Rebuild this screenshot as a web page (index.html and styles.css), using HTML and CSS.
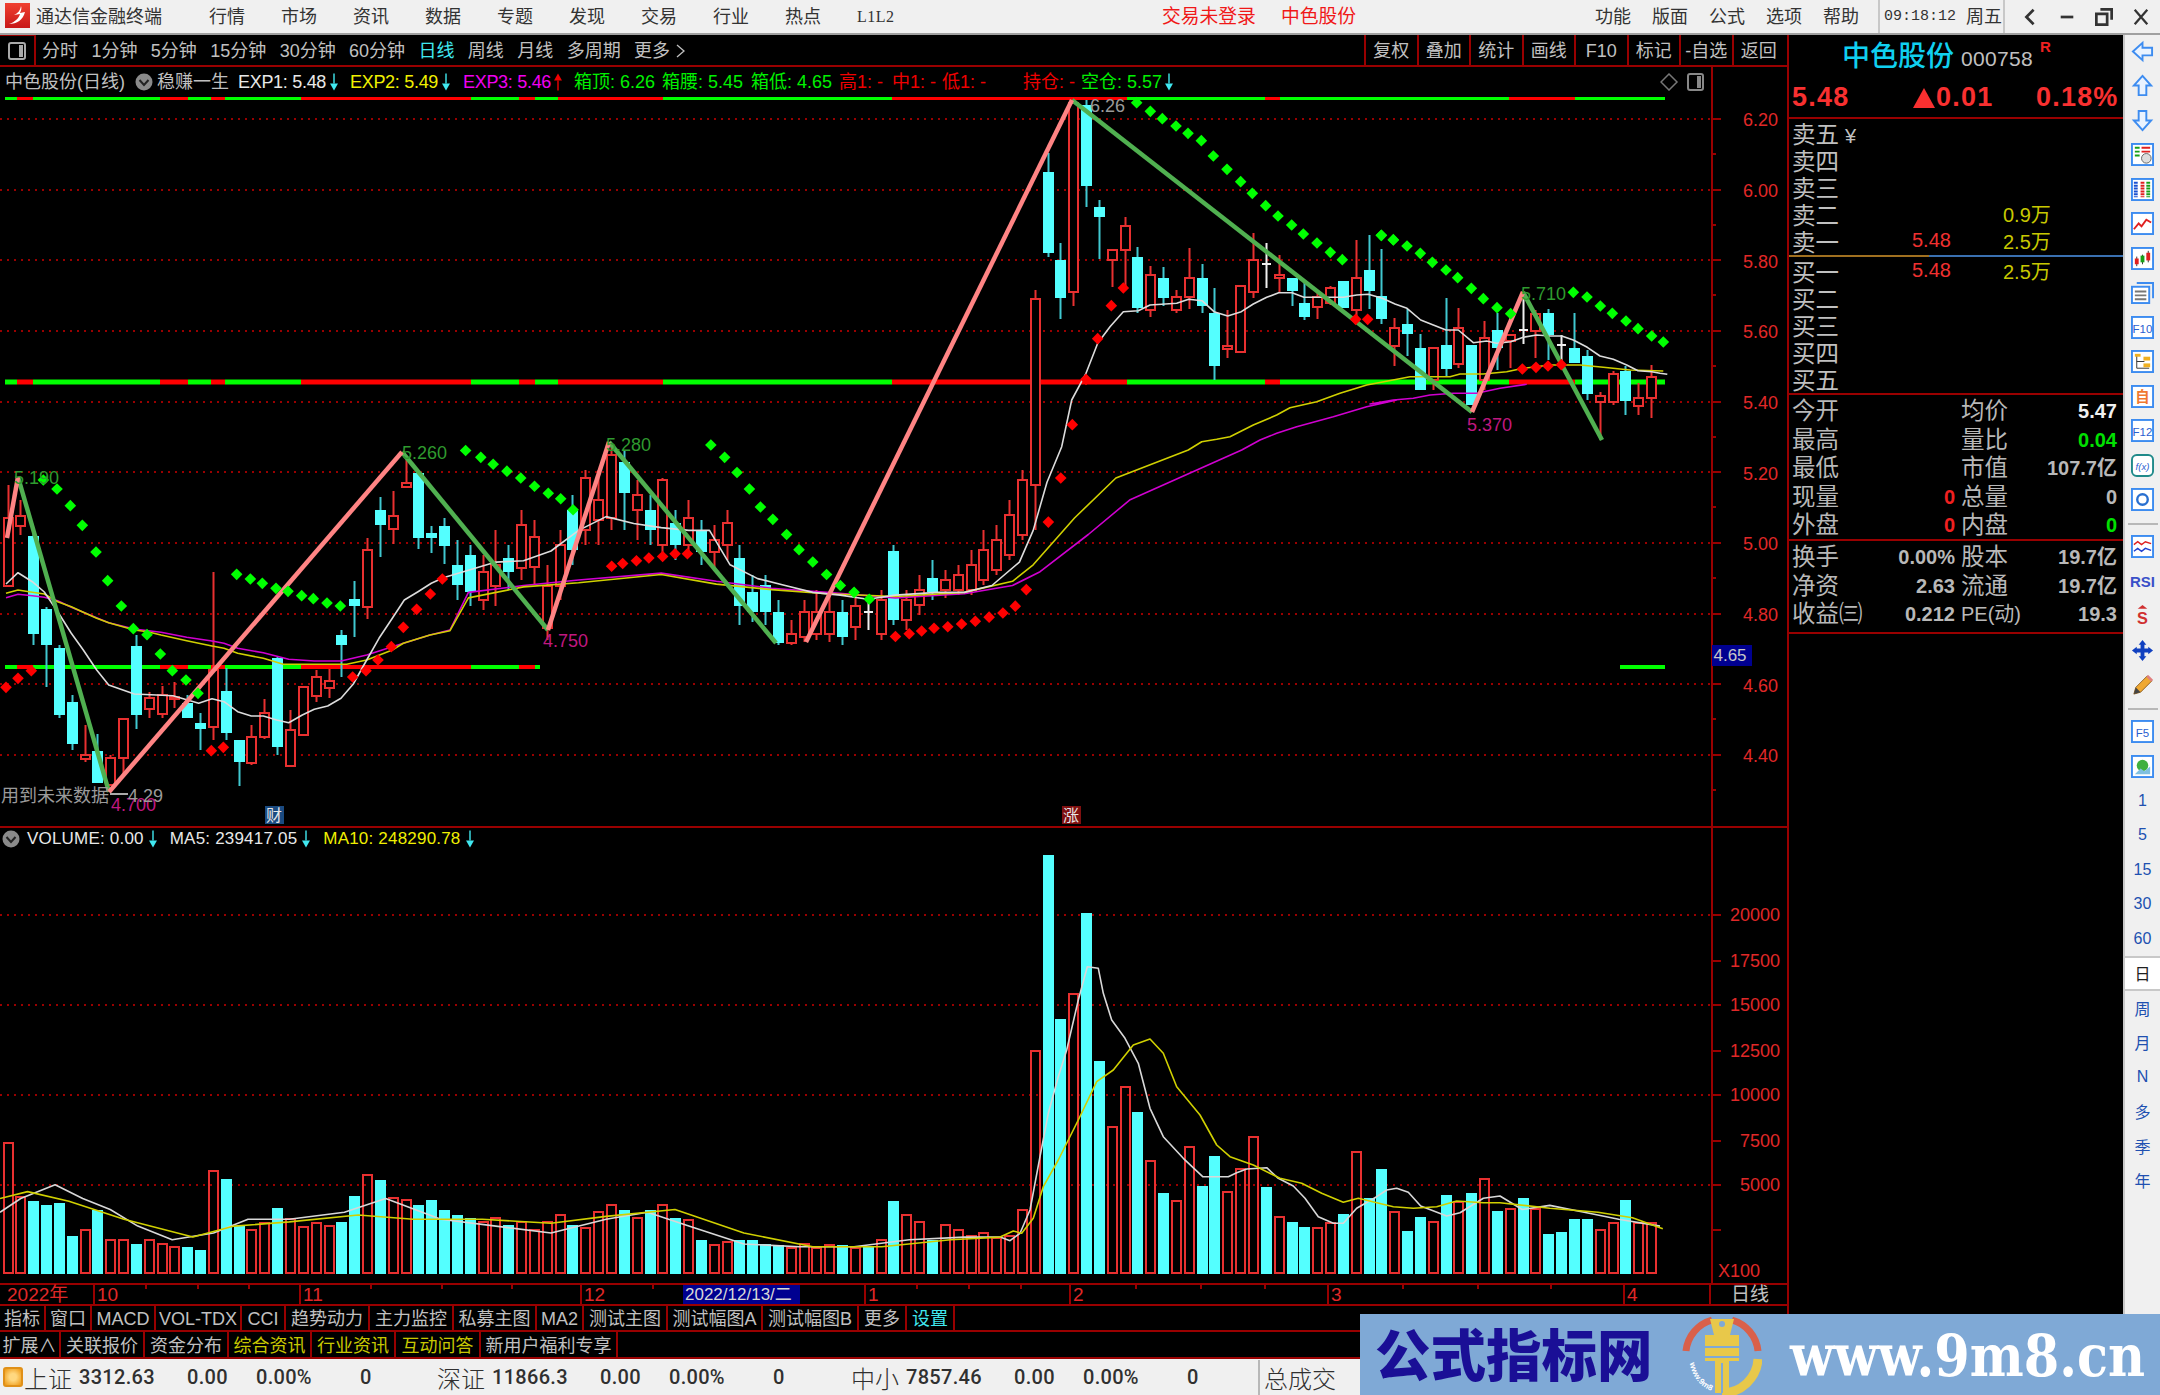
FILE: index.html
```html
<!DOCTYPE html>
<html lang="zh-CN">
<head>
<meta charset="utf-8">
<title>通达信金融终端</title>
<link rel="stylesheet" href="styles.css">
</head>
<body>
<svg class="defs" width="0" height="0">
  <defs>
    <g id="arrow-down"><path d="M4 0V10" stroke="currentColor" stroke-width="1.4" fill="none"/><path d="M0 10H8L4 17Z" fill="currentColor"/></g>
    <g id="arrow-up"><path d="M4 7V17" stroke="currentColor" stroke-width="1.4" fill="none"/><path d="M0 7H8L4 0Z" fill="currentColor"/></g>
    <g id="chev"><circle cx="9" cy="9" r="8.5" fill="#8a8a8a"/><path d="M4.5 7L9 12L13.500 7" stroke="#222" stroke-width="2" fill="none"/></g>
  </defs>
</svg>
<div class="app">
  <header class="titlebar">
    <svg class="logo" viewBox="0 0 25 25"><defs><linearGradient id="lg" x1="0" y1="0" x2="0" y2="1"><stop offset="0" stop-color="#f04030"/><stop offset="1" stop-color="#c81818"/></linearGradient></defs><rect width="25" height="25" fill="url(#lg)"/><path d="M16 3C15 8 13 10 9 12L15 11C14 15 10 19 4 21C12 21 18 17 20 9L15 10C16 8 17 5 16 3Z" fill="#fff"/></svg>
    <span class="appname">通达信金融终端</span>
    <nav class="menu menu-main"><span>行情</span><span>市场</span><span>资讯</span><span>数据</span><span>专题</span><span>发现</span><span>交易</span><span>行业</span><span>热点</span><span class="l1l2">L1L2</span></nav>
    <div class="red-status"><span class="login">交易未登录</span><span>中色股份</span></div>
    <nav class="menu menu-right"><span>功能</span><span>版面</span><span>公式</span><span>选项</span><span>帮助</span></nav>
    <div class="clock"><span class="clock-time">09:18:12</span><span>周五</span></div>
    <div class="winbtns">
      <svg viewBox="0 0 16 20"><path d="M12 2L4 10L12 18" stroke="#333" stroke-width="3" fill="none"/></svg>
      <svg viewBox="0 0 16 20"><path d="M1 10H15" stroke="#333" stroke-width="3" fill="none"/></svg>
      <svg viewBox="0 0 20 20"><path d="M6 1.500H18.500V13M1.500 6.500H13.500V18.500H1.500Z" stroke="#333" stroke-width="3" fill="none"/></svg>
      <svg viewBox="0 0 20 20"><path d="M3 2L17 18M17 2L3 18" stroke="#333" stroke-width="2.500" fill="none"/></svg>
    </div>
  </header>

  <div class="main">
    <section class="charts">
      <div class="toolbar">
        <div class="tb-icon"><svg viewBox="0 0 18 18"><rect x="1" y="1" width="16" height="16" rx="2" fill="none" stroke="#aaa" stroke-width="2"/><rect x="11" y="3" width="4" height="12" fill="#aaa"/></svg></div>
        <div class="periods"><span>分时</span><span>1分钟</span><span>5分钟</span><span>15分钟</span><span>30分钟</span><span>60分钟</span><span class="cur">日线</span><span>周线</span><span>月线</span><span>多周期</span><span class="more">更多<svg viewBox="0 0 9 14"><path d="M1 1L8 7L1 13" stroke="#c0c0c0" stroke-width="1.300" fill="none"/></svg></span></div>
        <div class="tb-btns"><span>复权</span><span>叠加</span><span>统计</span><span>画线</span><span>F10</span><span>标记</span><span>-自选</span><span>返回</span></div>
      </div>
      <div class="inforow">
        <span class="gray">中色股份(日线)</span>
        <svg class="chev-ic" viewBox="0 0 18 18"><use href="#chev"/></svg>
        <span class="gray">稳赚一生</span>
        <span class="white">EXP1: 5.48</span><svg class="arr cyan" viewBox="0 0 8 17"><use href="#arrow-down"/></svg>
        <span class="yellow">EXP2: 5.49</span><svg class="arr cyan" viewBox="0 0 8 17"><use href="#arrow-down"/></svg>
        <span class="magenta">EXP3: 5.46</span><svg class="arr red" viewBox="0 0 8 17"><use href="#arrow-up"/></svg>
        <span class="green">箱顶: 6.26</span>
        <span class="green">箱腰: 5.45</span>
        <span class="green">箱低: 4.65</span>
        <span class="red">高1: -</span>
        <span class="red">中1: -</span>
        <span class="red">低1: -</span>
        <span class="red">持仓: -</span>
        <span class="green">空仓: 5.57</span><svg class="arr cyan" viewBox="0 0 8 17"><use href="#arrow-down"/></svg>
        <svg class="info-corner" viewBox="0 0 44 18">
          <path d="M9 1L17 9L9 17L1 9Z" fill="none" stroke="#777" stroke-width="1.500"/>
          <rect x="28" y="1" width="15" height="16" rx="2" fill="none" stroke="#888" stroke-width="2"/><rect x="37" y="3" width="4" height="12" fill="#888"/>
        </svg>
      </div>

      <svg id="price" class="pane pane-price" viewBox="0 95 1787 733">
        <g id="p-grid"></g>
        <g id="p-candles"></g>
        <g id="p-lines"></g>
        <g id="p-dots"></g>
        <g class="axis-text">
          <text x="1778" y="126">6.20</text><text x="1778" y="197">6.00</text><text x="1778" y="268">5.80</text><text x="1778" y="338">5.60</text><text x="1778" y="409">5.40</text><text x="1778" y="480">5.20</text><text x="1778" y="550">5.00</text><text x="1778" y="621">4.80</text><text x="1778" y="692">4.60</text><text x="1778" y="762">4.40</text>
        </g>
        <g class="chart-label">
          <text class="lb-green" x="14" y="484">5.190</text>
          <text class="lb-green" x="402" y="459">5.260</text>
          <text class="lb-green" x="606" y="451">5.280</text>
          <text class="lb-green" x="1521" y="300">5.710</text>
          <text class="lb-gray" x="1090" y="112">6.26</text>
          <text class="lb-pink" x="543" y="647">4.750</text>
          <text class="lb-pink" x="1467" y="431">5.370</text>
          <text class="lb-pink" x="111" y="811">4.700</text>
          <text class="lb-gray" x="1" y="802">用到未来数据</text>
          <text class="lb-gray" x="128" y="802">4.29</text>
          <path class="lb-dash" d="M110 794H128"/>
        </g>
        <g>
          <rect class="tag-blue" x="265" y="806" width="19" height="18"/><text class="tag-text" x="274" y="821">财</text>
          <rect class="tag-red" x="1062" y="806" width="19" height="18"/><text class="tag-text" x="1071" y="821">涨</text>
        </g>
        <rect class="price-flag" x="1712" y="645" width="40" height="21"/><text class="price-flag-text" x="1730" y="661">4.65</text>
      </svg>

      <div class="volwrap">
        <div class="vol-legend">
          <svg class="chev-ic" viewBox="0 0 18 18"><use href="#chev"/></svg>
          <span class="white">VOLUME: 0.00</span><svg class="arr cyan" viewBox="0 0 8 17"><use href="#arrow-down"/></svg>
          <span class="white">MA5: 239417.05</span><svg class="arr cyan" viewBox="0 0 8 17"><use href="#arrow-down"/></svg>
          <span class="yellow">MA10: 248290.78</span><svg class="arr cyan" viewBox="0 0 8 17"><use href="#arrow-down"/></svg>
        </div>
        <svg id="volume" class="pane pane-vol" viewBox="0 828 1787 455">
          <g id="v-grid"></g>
          <g id="v-bars"></g>
          <g id="v-lines"></g>
          <g class="axis-text">
            <text x="1780" y="921">20000</text><text x="1780" y="967">17500</text><text x="1780" y="1011">15000</text><text x="1780" y="1057">12500</text><text x="1780" y="1101">10000</text><text x="1780" y="1147">7500</text><text x="1780" y="1191">5000</text>
            <text x="1760" y="1277">X100</text>
          </g>
        </svg>
      </div>

      <div class="daterow">
        <span class="d1">2022年</span><span class="d2">10</span><span class="d3">11</span><span class="d4">12</span><span class="d5">1</span><span class="d6">2</span><span class="d7">3</span><span class="d8">4</span><span class="d9">日线</span>
        <span class="date-flag">2022/12/13/二</span>
        <svg class="date-ticks" viewBox="0 0 1711 4"><path d="M146 0V4M198 0V4M249 0V4M371 0V4M442 0V4M512 0V4M653 0V4M917 0V4M969 0V4M1021 0V4M1136 0V4M1201 0V4M1265 0V4M1403 0V4M1478 0V4M1551 0V4" stroke="#990000" stroke-width="2"/></svg>
      </div>
      <div class="tabs tabs1">
        <span>指标</span><span>窗口</span><span>MACD</span><span>VOL-TDX</span><span>CCI</span><span>趋势动力</span><span>主力监控</span><span>私募主图</span><span>MA2</span><span>测试主图</span><span>测试幅图A</span><span>测试幅图B</span><span>更多</span><span class="cyan">设置</span>
      </div>
      <div class="tabs tabs2">
        <span>扩展∧</span><span>关联报价</span><span>资金分布</span><span class="yellow-dim">综合资讯</span><span class="yellow-dim">行业资讯</span><span class="yellow-dim">互动问答</span><span>新用户福利专享</span>
      </div>
    </section>

    <aside class="quote">
      <div class="q-head"><span class="q-name">中色股份</span><span class="q-code">000758</span><span class="q-r">R</span></div>
      <div class="q-price"><span class="qp1">5.48</span><span class="qp2"><i class="tri"></i>0.01</span><span class="qp3">0.18%</span></div>
      <div class="book">
        <div class="b-row"><span class="b-l">卖五<em class="yen">¥</em></span></div>
        <div class="b-row"><span class="b-l">卖四</span></div>
        <div class="b-row"><span class="b-l">卖三</span></div>
        <div class="b-row"><span class="b-l">卖二</span><span class="b-p"></span><span class="b-v">0.9万</span></div>
        <div class="b-row"><span class="b-l">卖一</span><span class="b-p">5.48</span><span class="b-v">2.5万</span></div>
      </div>
      <div class="midline"></div>
      <div class="book book-buy">
        <div class="b-row"><span class="b-l">买一</span><span class="b-p">5.48</span><span class="b-v">2.5万</span></div>
        <div class="b-row"><span class="b-l">买二</span></div>
        <div class="b-row"><span class="b-l">买三</span></div>
        <div class="b-row"><span class="b-l">买四</span></div>
        <div class="b-row"><span class="b-l">买五</span></div>
      </div>
      <div class="stats stats1">
        <span class="k">今开</span><span class="v"></span><span class="k">均价</span><span class="v w">5.47</span>
        <span class="k">最高</span><span class="v"></span><span class="k">量比</span><span class="v g">0.04</span>
        <span class="k">最低</span><span class="v"></span><span class="k">市值</span><span class="v">107.7亿</span>
        <span class="k">现量</span><span class="v r">0</span><span class="k">总量</span><span class="v">0</span>
        <span class="k">外盘</span><span class="v r">0</span><span class="k">内盘</span><span class="v g">0</span>
      </div>
      <div class="stats stats2">
        <span class="k">换手</span><span class="v">0.00%</span><span class="k">股本</span><span class="v">19.7亿</span>
        <span class="k">净资</span><span class="v">2.63</span><span class="k">流通</span><span class="v">19.7亿</span>
        <span class="k">收益㈢</span><span class="v">0.212</span><span class="k pe">PE(动)</span><span class="v">19.3</span>
      </div>
    </aside>

    <nav class="strip">
      <div class="si"><svg viewBox="0 0 24 24"><path d="M2 12L12 3V8H22V16H12V21Z" fill="#eaf3ff" stroke="#3d8cf0" stroke-width="2"/></svg></div>
      <div class="si"><svg viewBox="0 0 24 24"><path d="M12 2L21 12H16V22H8V12H3Z" fill="#eaf3ff" stroke="#3d8cf0" stroke-width="2"/></svg></div>
      <div class="si"><svg viewBox="0 0 24 24"><path d="M12 22L21 12H16V2H8V12H3Z" fill="#eaf3ff" stroke="#3d8cf0" stroke-width="2"/></svg></div>
      <div class="si"><svg viewBox="0 0 24 24"><rect x="1" y="1" width="22" height="22" fill="#fff" stroke="#3d8cf0" stroke-width="2"/><path d="M4 5H9M4 9H9M4 13H9" stroke="#18a018" stroke-width="2"/><path d="M11 5H20M11 9H20" stroke="#e02020" stroke-width="2"/><circle cx="16" cy="16" r="5" fill="#ddd" stroke="#666"/></svg></div>
      <div class="si"><svg viewBox="0 0 24 24"><rect x="1" y="1" width="22" height="22" fill="#fff" stroke="#3d8cf0" stroke-width="2"/><path d="M5 4V20" stroke="#1a50d0" stroke-width="4" stroke-dasharray="2 1"/><path d="M12 4V20" stroke="#e02020" stroke-width="4" stroke-dasharray="2 1"/><path d="M18 4V20" stroke="#18a018" stroke-width="4" stroke-dasharray="2 1"/></svg></div>
      <div class="si"><svg viewBox="0 0 24 24"><rect x="1" y="1" width="22" height="22" fill="#fff" stroke="#3d8cf0" stroke-width="2"/><path d="M3 18L8 12L11 15L16 8L21 11" stroke="#e02020" stroke-width="2" fill="none"/></svg></div>
      <div class="si"><svg viewBox="0 0 24 24"><rect x="1" y="1" width="22" height="22" fill="#fff" stroke="#3d8cf0" stroke-width="2"/><path d="M6 10V20M12 8V18M18 4V16" stroke="#333"/><rect x="4" y="12" width="4" height="6" fill="#e02020"/><rect x="10" y="9" width="4" height="7" fill="#18a018"/><rect x="16" y="6" width="4" height="8" fill="#e02020"/></svg></div>
      <div class="si"><svg viewBox="0 0 24 24"><path d="M6 2H23V18" fill="none" stroke="#3d8cf0" stroke-width="2"/><rect x="1" y="6" width="18" height="17" fill="#fff" stroke="#3d8cf0" stroke-width="2"/><path d="M4 11H16M4 15H16M4 19H16" stroke="#777" stroke-width="2"/></svg></div>
      <div class="si"><svg viewBox="0 0 24 24"><rect x="1" y="1" width="22" height="22" fill="#fff" stroke="#3d8cf0" stroke-width="2"/><text class="ic-text" x="12" y="18">F10</text></svg></div>
      <div class="si"><svg viewBox="0 0 24 24"><rect x="1" y="1" width="22" height="22" fill="#fff" stroke="#3d8cf0" stroke-width="2"/><path d="M6 5V19H19M6 12H14" stroke="#333" fill="none"/><rect x="4" y="4" width="6" height="3" fill="#f0b020"/><rect x="13" y="7" width="7" height="4" fill="#f0b020"/><rect x="13" y="14" width="7" height="4" fill="#f0b020"/></svg></div>
      <div class="si"><svg viewBox="0 0 24 24"><rect x="1" y="1" width="22" height="22" fill="#fff" stroke="#3d8cf0" stroke-width="2"/><text class="ic-text orange" x="12" y="18">自</text></svg></div>
      <div class="si"><svg viewBox="0 0 24 24"><rect x="1" y="1" width="22" height="22" fill="#fff" stroke="#3d8cf0" stroke-width="2"/><text class="ic-text" x="12" y="18">F12</text></svg></div>
      <div class="si"><svg viewBox="0 0 24 24"><rect x="1" y="1" width="22" height="22" rx="5" fill="#fff" stroke="#208a8a" stroke-width="2"/><text class="ic-text fx" x="12" y="17">f(x)</text></svg></div>
      <div class="si"><svg viewBox="0 0 24 24"><rect x="1" y="1" width="22" height="22" fill="#fff" stroke="#3d8cf0" stroke-width="2"/><circle cx="12" cy="12" r="5.500" fill="none" stroke="#2a70d0" stroke-width="2.500"/></svg></div>
      <div class="sep"></div>
      <div class="si"><svg viewBox="0 0 24 24"><rect x="1" y="1" width="22" height="22" fill="#fff" stroke="#3d8cf0" stroke-width="2"/><path d="M3 10L7 7L11 10L15 7L21 9" stroke="#e02020" stroke-width="1.500" fill="none"/><path d="M3 17L7 14L11 17L15 14L21 16" stroke="#2040d0" stroke-width="1.500" fill="none"/></svg></div>
      <div class="si si-rsi">RSI</div>
      <div class="si"><svg viewBox="0 0 24 24"><path d="M12 1L17 5H7Z" fill="#d03030"/><text class="ic-dollar" x="12" y="21">S</text></svg></div>
      <div class="si"><svg viewBox="0 0 24 24"><path d="M12 1L16 6H14V10H18V8L23 12L18 16V14H14V18H16L12 23L8 18H10V14H6V16L1 12L6 8V10H10V6H8Z" fill="#1040c0"/></svg></div>
      <div class="si"><svg viewBox="0 0 24 24"><path d="M3 22L5 15L17 3L22 8L10 20Z" fill="#f0a830" stroke="#906020"/><path d="M16 4L18 2L23 7L21 9Z" fill="#e08080"/><path d="M3 22L5 15L10 20Z" fill="#444"/></svg></div>
      <div class="sep"></div>
      <div class="si"><svg viewBox="0 0 24 24"><rect x="1" y="1" width="22" height="22" fill="#fff" stroke="#3d8cf0" stroke-width="2"/><text class="ic-text" x="12" y="18">F5</text></svg></div>
      <div class="si"><svg viewBox="0 0 24 24"><rect x="1" y="1" width="22" height="22" fill="#fff" stroke="#3d8cf0" stroke-width="2"/><circle cx="12" cy="11" r="6" fill="#40b040"/><path d="M4 20L10 14L14 17L20 12V20Z" fill="#80c0e0"/></svg></div>
      <div class="st">1</div><div class="st">5</div><div class="st">15</div><div class="st">30</div><div class="st">60</div>
      <div class="st st-cur">日</div><div class="st">周</div><div class="st">月</div><div class="st">N</div><div class="st">多</div><div class="st">季</div><div class="st">年</div>
    </nav>
  </div>

  <footer class="statusbar">
    <span class="s-ic"></span>
    <span class="s-name">上证</span><span class="s-num n1">3312.63</span><span class="s-num n2">0.00</span><span class="s-num n3">0.00%</span><span class="s-num n4">0</span>
    <span class="s-name">深证</span><span class="s-num n1">11866.3</span><span class="s-num n2">0.00</span><span class="s-num n3">0.00%</span><span class="s-num n4">0</span>
    <span class="s-name zx">中小</span><span class="s-num n1">7857.46</span><span class="s-num n2">0.00</span><span class="s-num n3">0.00%</span><span class="s-num n4 n4z">0</span>
    <span class="s-name total">总成交</span>
  </footer>

  <div class="watermark">
    <span class="wm-cn">公式指标网</span>
    <svg class="wm-logo" viewBox="0 0 80 80">
      <path d="M4 36A36 36 0 0 1 30 5" stroke="#d9604a" stroke-width="7" fill="none"/>
      <path d="M50 5A36 36 0 0 1 76 36" stroke="#d9604a" stroke-width="7" fill="none"/>
      <path d="M76 44A36 36 0 0 1 40 78" stroke="#e8c84a" stroke-width="9" fill="none"/>
      <path id="wmarc" d="M8 48A34 34 0 0 0 30 76" fill="none"/>
      <text class="wm-small"><textPath href="#wmarc">www.9m8.cn</textPath></text>
      <path d="M28 4H52L48 20H57V46H47V78H33V46H23V20H32Z" fill="#e8c84a"/>
      <circle cx="40" cy="9" r="3" fill="#7fa9d6"/>
      <path d="M23 32H57M23 42H57M40 48V78" stroke="#7fa9d6" stroke-width="2"/>
    </svg>
    <span class="wm-url">www.9m8.cn</span>
  </div>
</div>
<script src="chart.js"></script>
</body>
</html>
```
FILE: styles.css
```css
* { box-sizing: border-box; margin: 0; padding: 0; }
html, body { width: 2160px; height: 1395px; overflow: hidden; background: #000; }
body { font-family: "Liberation Sans", "Noto Sans CJK SC", sans-serif; font-size: 18px; color: #c0c0c0; }
.defs { position: absolute; }
.app { position: relative; width: 2160px; height: 1395px; display: flex; flex-direction: column; }

/* title bar */
.titlebar { height: 35px; flex: none; display: flex; align-items: center; background: #f0f0f0; border-bottom: 2px solid #a0a0a0; color: #333; padding-left: 5px; line-height: 24px; }
.logo { width: 25px; height: 25px; flex: none; margin-top: -2px; }
.appname { margin-left: 6px; width: 126px; white-space: nowrap; flex: none; padding-top: 1px; }
.menu { display: flex; gap: 36px; flex: none; white-space: nowrap; align-items: center; padding-top: 1px; }
.menu span { flex: none; }
.menu-main { margin-left: 47px; width: 683px; }
.l1l2 { font-size: 16px; font-family: "Liberation Serif", serif; letter-spacing: 0.500px; }
.red-status { display: flex; gap: 25px; color: #f01818; margin-left: 270px; font-size: 18.800px; white-space: nowrap; flex: none; padding-top: 1px; }
.menu-right { margin-left: 239px; gap: 21px; }
.clock { display: flex; gap: 11px; align-items: center; margin-left: 19px; width: 127px; height: 33px; padding-left: 4px; border-left: 2px solid #c8c8c8; border-right: 2px solid #c8c8c8; white-space: nowrap; flex: none; }
.clock-time { font-family: "Liberation Mono", monospace; font-size: 15px; width: 71px; }
.winbtns { display: flex; gap: 19px; align-items: center; margin-left: 16px; flex: none; }
.winbtns svg { width: 18px; height: 18px; flex: none; }

/* layout */
.main { flex: 1; display: flex; min-height: 0; }
.charts { width: 1787px; flex: none; display: flex; flex-direction: column; position: relative; }

/* toolbar */
.toolbar { height: 32px; flex: none; display: flex; align-items: center; border-bottom: 2px solid #990000; line-height: 24px; }
.tb-icon { width: 36px; height: 30px; flex: none; display: flex; align-items: center; justify-content: center; border-right: 2px solid #990000; border-top: 1px solid #990000; }
.tb-icon svg { width: 18px; height: 18px; }
.periods { display: flex; gap: 13.400px; padding-left: 6px; padding-top: 2px; white-space: nowrap; }
.periods .cur { color: #40e8f0; }
.more { display: flex; align-items: center; }
.more svg { width: 9px; height: 14px; margin-left: 6px; }
.tb-btns { margin-left: auto; margin-right: 3px; display: flex; height: 100%; }
.tb-btns span { width: 52.500px; display: flex; align-items: center; justify-content: center; border-left: 2px solid #990000; white-space: nowrap; padding-top: 2px; }

/* info row */
.inforow { position: relative; height: 28px; flex: none; padding-left: 5px; padding-top: 2px; white-space: nowrap; display: grid; align-items: center; line-height: 24px;
  grid-template-columns: 130px 22px 81px 92px 20px 92px 21px 91px 20px 88px 89px 88px 53px 50px 81px 58px 84px 8px; }
.inforow::after { content: ""; position: absolute; left: 1711px; top: 0; width: 2px; height: 28px; background: #990000; }
.chev-ic { width: 18px; height: 18px; flex: none; }
.arr { width: 8px; height: 18px; flex: none; }
.info-corner { position: absolute; left: 1660px; top: 6px; width: 44px; height: 18px; }
.gray { color: #c0c0c0; }
.white { color: #e8e8e8; }
.yellow { color: #f0f000; }
.yellow-dim { color: #c8c800; }
.magenta { color: #f000f0; }
.green { color: #00f000; }
.red { color: #f00000; }
.cyan { color: #40e8f0; }
.inforow .white, .inforow .yellow, .inforow .magenta { letter-spacing: -0.300px; }

/* panes */
.pane { display: block; width: 1787px; flex: none; }
.pane-price { height: 733px; }
.pane-vol { height: 455px; }
.volwrap { position: relative; flex: none; height: 455px; }
.vol-legend { position: absolute; left: 2px; top: 1px; display: flex; align-items: center; gap: 7px; height: 20px; white-space: nowrap; font-size: 17px; letter-spacing: 0.200px; }
.vol-legend .arr { margin-left: -2px; margin-right: 6px; }

.axis-text text { fill: #e02828; font-size: 18px; text-anchor: end; }
.chart-label text { font-size: 18px; }
.lb-green { fill: #2f9a2f; }
.lb-gray { fill: #9a9a9a; }
.lb-pink { fill: #c01880; }
.lb-dash { stroke: #aaa; stroke-width: 2; fill: none; }
.tag-blue { fill: #1a4a80; }
.tag-red { fill: #801010; }
.tag-text { fill: #e8e8e8; font-size: 16px; text-anchor: middle; }
.price-flag { fill: #000090; }
.price-flag-text { fill: #c8c8c8; font-size: 17px; text-anchor: middle; }

/* date row */
.daterow { position: relative; height: 23px; flex: none; display: grid; grid-template-columns: 95px 206px 281px 284px 205px 258px 296px 86px 76px; border-bottom: 2px solid #990000; border-top: 2px solid #990000; color: #e02828; font-size: 19px; line-height: 19px; }
.daterow span { padding-left: 2px; border-right: 2px solid #990000; white-space: nowrap; height: 19px; }
.daterow .d1 { padding-left: 7px; }
.daterow .d9 { color: #c0c0c0; text-align: center; border-right: 0; }
.daterow .date-flag { position: absolute; left: 683px; top: 0; width: 117px; height: 19px; background: #000090; color: #d8d8d8; border: 0; font-size: 17px; line-height: 19px; padding-left: 2px; }
.date-ticks { position: absolute; left: 0; top: 0; width: 1711px; height: 4px; }

/* tabs */
.tabs { display: grid; flex: none; color: #c0c0c0; border-bottom: 2px solid #990000; white-space: nowrap; line-height: 22px; }
.tabs span { display: flex; align-items: center; justify-content: center; border-right: 2px solid #990000; padding-top: 2px; }
.tabs1 { height: 26px; grid-template-columns: 46px 46px 64px 86px 44px 84px 84px 83px 47px 84px 95px 96px 48px 48px; }
.tabs2 { height: 27px; grid-template-columns: 61px 84px 84px 83px 84px 85px 137px; }
.tabs2 span { padding-top: 3px; }

/* quote panel */
.quote { width: 336px; flex: none; border-left: 2px solid #990000; display: flex; flex-direction: column; }
.q-head { height: 37px; display: flex; align-items: flex-start; padding-left: 53px; padding-top: 3px; white-space: nowrap; }
.q-name { color: #10d0f0; font-size: 28px; line-height: 38px; font-weight: 500; }
.q-code { color: #c0c0c0; font-size: 21px; margin-left: 7px; line-height: 42px; letter-spacing: 0.300px; }
.q-r { color: #f02020; font-size: 15px; margin-left: 7px; line-height: 18px; font-weight: 700; }
.q-price { height: 47px; display: flex; align-items: center; border-bottom: 2px solid #990000; color: #f83030; font-weight: 700; font-size: 27px; letter-spacing: 1.200px; padding-left: 3px; padding-top: 6px; white-space: nowrap; }
.qp1 { width: 121px; }
.qp2 { width: 123px; display: flex; align-items: center; }
.tri { width: 0; height: 0; border-left: 11px solid transparent; border-right: 11px solid transparent; border-bottom: 20px solid #f83030; margin-right: 1px; }
.book { height: 136px; display: flex; flex-direction: column; }
.book-buy { height: 138px; border-bottom: 2px solid #990000; }
.b-row { height: 27px; flex: none; display: flex; align-items: center; padding-left: 3px; position: relative; }
.b-l { width: 120px; font-size: 23.500px; color: #c0c0c0; white-space: nowrap; }
.yen { font-style: normal; font-size: 20px; margin-left: 6px; }
.b-p { width: 40px; color: #f03030; font-size: 20px; font-weight: 500; }
.b-v { margin-left: 51px; color: #c8c800; font-size: 20px; }
.midline { height: 2px; flex: none; background: linear-gradient(to right, #a07020 0 140px, #3a70b0 140px); }
.stats { display: grid; grid-template-columns: 70px 93px 70px 92px; padding-left: 3px; border-bottom: 2px solid #990000; }
.stats1 { height: 146px; grid-auto-rows: 28.500px; padding-top: 2px; }
.stats2 { height: 93px; grid-auto-rows: 28.500px; padding-top: 2px; }
.stats .k { font-size: 23.500px; color: #b8b8b8; white-space: nowrap; line-height: 28px; }
.stats .v { font-size: 20px; font-weight: 700; color: #b8b8b8; text-align: right; line-height: 28px; white-space: nowrap; }
.stats .k:nth-child(4n+3) { padding-left: 6px; }
.stats .pe { font-size: 20px; }
.stats .w { color: #f0f0f0; }
.stats .g { color: #00e000; }
.stats .r { color: #f02020; }

/* side strip */
.strip { width: 37px; flex: none; background: #f0f0f0; border-left: 2px solid #c8c8c8; display: flex; flex-direction: column; align-items: center; }
.si { height: 34.500px; width: 100%; flex: none; display: flex; align-items: center; justify-content: center; position: relative; top: -1px; }
.si svg { width: 23px; height: 23px; }
.ic-text { font-size: 12px; fill: #2a60d0; text-anchor: middle; font-weight: 400; }
.ic-text.orange { fill: #f07830; font-weight: 700; font-size: 15px; }
.ic-text.fx { font-size: 10px; font-style: italic; }
.ic-dollar { fill: #d03030; font-size: 17px; font-weight: 700; text-anchor: middle; }
.si-rsi { color: #3a50c8; font-size: 15px; font-weight: 700; }
.sep { height: 12.500px; width: 30px; flex: none; background: linear-gradient(#b8b8b8, #b8b8b8) center / 100% 2px no-repeat; }
.st { height: 34.500px; width: 100%; flex: none; display: flex; align-items: center; justify-content: center; color: #2050b0; font-size: 16px; position: relative; top: -1px; }
.st-cur { background: #fff; border-top: 2px solid #c8c8c8; border-bottom: 2px solid #c8c8c8; color: #202020; }

/* status bar */
.statusbar { height: 36px; flex: none; background: #f0f0f0; display: flex; align-items: center; color: #303030; padding-left: 3px; white-space: nowrap; }
.s-ic { width: 20px; height: 20px; flex: none; background: radial-gradient(circle, #ffd880 30%, #f0a020 90%); border: 2px solid #e09018; border-radius: 3px; }
.s-name { font-size: 24px; margin-left: 1px; width: 49px; font-weight: 300; flex: none; }
.s-num { font-family: "Roboto", "Liberation Sans", sans-serif; font-weight: 500; font-size: 20px; letter-spacing: 0.300px; flex: none; }
.n1 { margin-left: 6px; width: 108px; }
.n2 { width: 69px; }
.n3 { width: 104px; }
.n4 { width: 76px; }
.n4z { width: 70px; }
.zx { margin-left: 2px; }
.total { margin-left: 1px; width: 90px; padding-left: 4px; border-left: 2px solid #b8b8b8; }

/* watermark overlay */
.watermark { position: absolute; left: 1360px; top: 1314px; width: 800px; height: 81px; background: #7fa9d6; display: flex; align-items: center; }
.wm-cn { margin-left: 15px; font-size: 55.500px; font-weight: 900; color: #1a0f96; width: 278px; line-height: 60px; white-space: nowrap; font-family: "Noto Sans CJK SC", sans-serif; position: relative; top: -3px; flex: none; }
.wm-logo { width: 80px; height: 80px; margin-left: 29px; flex: none; }
.wm-small { font-size: 8px; fill: #fff; font-weight: 700; }
.wm-url { margin-left: 28px; font-family: "DejaVu Serif", serif; font-weight: 700; font-size: 51px; color: #fff; white-space: nowrap; line-height: 60px; transform: scaleY(1.150); transform-origin: center; flex: none; }
```
FILE: chart.js
```js
// Daily candles: type (r = up, c = down, w = doji), body top, body bottom, wick high, wick low, volume bar top (page px)
var CANDLES = [
['r',518,586,485,586,1143],['r',516,526,500,535,1197],['c',536,634,530,645,1201],['c',609,645,607,687,1205],['c',648,715,645,718,1203],
['c',702,744,695,750,1236],['r',755,759,725,762,1230],['c',751,783,734,783,1210],['r',758,785,755,785,1240],['r',719,758,719,777,1240],
['c',646,715,635,729,1244],['r',698,709,692,718,1240],['r',695,714,686,718,1244],['r',697,698,682,708,1247],['c',703,718,695,718,1247],
['c',723,729,713,750,1250],['r',670,727,572,740,1171],['c',691,733,668,740,1179],['c',740,762,740,786,1226],['r',737,763,725,765,1230],
['r',713,737,699,739,1223],['c',658,747,657,755,1208],['r',730,766,710,767,1219],['r',687,735,687,735,1227],['r',677,696,670,702,1223],
['r',681,688,669,698,1226],['c',635,645,630,677,1222],['c',599,606,581,637,1196],['r',550,607,538,619,1175],['c',510,525,497,557,1180],
['r',516,529,491,544,1198],['r',483,487,457,488,1200],['c',473,538,473,549,1205],['c',533,538,526,553,1200],['c',526,546,518,564,1210],
['c',565,585,540,600,1215],['c',555,592,545,606,1218],['r',572,600,555,610,1222],['r',565,586,530,606,1218],['c',558,572,545,590,1225],
['r',525,568,510,580,1222],['r',537,567,520,585,1230],['r',586,628,565,640,1222],['r',545,586,530,600,1215],['c',510,550,495,565,1225],
['r',478,530,470,545,1228],['r',500,520,470,545,1212],['r',455,518,444,530,1205],['c',462,493,450,530,1210],['r',495,510,480,540,1218],
['c',510,530,495,545,1210],['r',480,545,478,552,1205],['c',523,545,510,560,1218],['r',518,545,500,555,1220],['c',530,552,520,565,1240],
['r',540,552,525,570,1245],['r',523,545,510,560,1242],['c',558,606,545,625,1240],['c',592,612,575,622,1240],['c',585,612,575,625,1244],
['c',612,643,600,645,1245],['r',634,643,620,645,1248],['r',612,637,600,642,1244],['r',612,634,590,640,1248],['r',612,634,595,642,1245],
['c',612,637,600,645,1245],['r',606,627,590,640,1248],['w',612,612,600,630,1247],['r',600,634,590,640,1240],['c',551,620,545,625,1201],
['r',600,620,590,630,1215],['r',590,605,575,615,1222],['c',578,592,560,600,1240],['r',580,590,570,598,1225],['r',575,590,565,595,1230],
['r',565,590,550,595,1236],['r',550,580,530,585,1233],['r',540,570,525,575,1238],['r',515,555,500,560,1236],['r',480,535,470,540,1210],
['r',299,485,290,530,1051],['c',172,253,153,257,855],['c',260,298,243,319,1019],['r',103,292,100,306,994],['c',105,186,100,207,913],
['c',207,217,200,259,1061],['r',250,260,250,287,1127],['r',226,250,217,287,1087],['c',257,308,247,313,1112],['r',275,310,266,317,1161],
['c',278,298,267,306,1193],['r',297,310,290,313,1201],['r',278,297,248,309,1147],['c',278,306,264,313,1186],['c',313,366,288,380,1156],
['r',346,349,310,358,1192],['r',286,352,286,352,1169],['r',260,292,233,298,1137],['w',264,264,243,288,1187],['r',275,278,255,292,1217],
['c',278,291,278,306,1222],['c',303,317,283,320,1227],['r',297,307,290,319,1228],['r',288,303,286,305,1223],['c',281,308,281,308,1214],
['r',278,310,240,320,1152],['c',270,291,235,309,1198],['c',296,319,249,324,1169],['r',328,346,318,366,1212],['c',324,334,309,356,1231],
['c',348,390,334,390,1217],['r',348,380,348,390,1222],['c',345,369,298,377,1195],['r',328,364,308,368,1202],['c',345,405,345,405,1193],
['r',338,380,321,390,1179],['c',330,348,313,370,1211],['r',335,341,335,368,1209],['w',330,330,298,344,1198],['r',314,331,310,358,1209],
['c',313,335,309,360,1234],['w',345,345,335,361,1232],['c',348,363,313,363,1219],['c',356,394,350,400,1219],['r',396,402,392,440,1230],
['r',374,402,371,405,1223],['c',371,401,366,415,1200],['r',398,406,383,415,1223],['r',377,398,365,418,1223]
];

var Z8 = function (a) { return a.map(function (p) { return [p[0] / 3, 430 + p[1] / 3]; }); };
var Z9 = function (a) { return a.map(function (p) { return [1000 + p[0] / 3, 90 + p[1] / 3]; }); };
var Z10 = function (a) { return a.map(function (p) { return [1350 + p[0] / 3, 230 + p[1] / 3]; }); };
var Z12 = function (a) { return a.map(function (p) { return [1000 + p[0] / 3, 820 + p[1] / 3]; }); };
var S = function (a) { return a.map(function (p) { return [p[0] * 1.3776, p[1] * 1.3776]; }); };

var WHITE = [].concat(
  Z8([[18,462],[54,428],[97,455],[133,486],[173,545],[214,610],[250,660],[290,720],[326,765],[403,792],[519,797],[596,820],[636,806],[672,815],[713,845],[754,858],[790,858],[830,870],[866,878],[907,855],[943,838],[983,828],[1023,805],[1060,762],[1100,690],[1137,625],[1177,565],[1213,510],[1254,485],[1294,460],[1330,443]]),
  S([[340,414],[360,408],[380,407],[400,400],[420,385],[440,375],[460,380],[480,383],[500,385],[515,385],[530,410],[550,420],[570,425],[590,430],[610,432],[630,435],[650,432],[680,430],[700,430],[720,425],[740,408],[750,385],[760,350]]),
  Z9([[185,1070],[215,930],[258,850],[293,760],[330,710],[370,665],[415,662],[450,645],[530,640],[566,628],[606,632],[642,665],[683,678],[724,665],[760,642],[800,622],[836,608],[876,608],[912,622],[953,622],[1030,622],[1070,615]]),
  Z10([[55,193],[97,205],[135,222],[171,235],[212,270],[250,285],[288,300],[325,300],[370,338],[410,333],[440,340],[482,335],[520,322],[560,315],[600,318],[635,318],[670,330],[712,352],[750,378],[790,388],[830,405],[864,422],[905,425],[930,430],[952,433]])
);
var YELLOW = [].concat(
  Z8([[18,490],[54,480],[97,487],[133,492],[173,515],[214,530],[250,547],[290,565],[326,578],[403,600],[443,605],[483,615],[560,632],[636,648],[672,655],[713,670],[790,685],[850,703],[1040,703],[1100,690],[1177,660],[1210,640],[1290,615],[1350,602]]),
  S([[340,434],[380,426],[420,423],[480,417],[520,424],[560,428],[600,431],[650,433],[700,430],[735,422],[750,410],[780,376],[810,347]]),
  Z9([[565,1080],[605,1055],[650,1048],[690,1040],[760,1005],[830,975],[870,953],[950,935],[1020,910],[1100,885]]),
  Z10([[145,447],[180,440],[300,440],[330,432],[400,432],[470,425],[520,415],[600,405],[690,405],[760,412],[840,420],[940,423]])
);
var MAGENTA = [].concat(
  Z8([[18,503],[54,493],[97,497],[133,502],[173,512],[214,532],[250,547],[326,578],[403,597],[483,607],[560,622],[636,633],[672,640],[713,655],[790,668],[866,688],[943,693],[1023,693],[1100,675],[1177,650],[1290,615],[1350,600]]),
  S([[340,430],[380,425],[420,421],[480,416],[520,422],[560,427],[600,430],[650,434],[700,431],[735,425],[755,415],[790,388],[820,363]]),
  Z9([[725,1080],[780,1050],[830,1030],[890,1010],[1000,980],[1100,950],[1190,930]]),
  Z10([[60,522],[130,510],[190,505],[240,495],[310,490],[380,490],[450,475],[530,463]])
);
var VOL_WHITE = [].concat(
  S([[0,880],[15,870],[40,860],[60,870],[80,878],[100,890],[125,900],[155,895],[180,885],[210,885],[250,880],[280,870],[320,885],[360,890],[400,895],[440,885],[470,880],[500,890],[540,903],[580,905],[620,905],[660,900],[700,898],[726,898]]),
  Z12([[30,1262],[60,1240],[90,1170],[120,1010],[145,880],[175,770],[200,690],[235,540],[262,440],[295,445],[310,520],[335,600],[375,655],[415,730],[450,865],[490,950],[550,1015],[608,1070],[685,1070],[710,1058],[740,1047],[800,1043],[835,1075],[880,1098],[915,1135],[955,1190],[1000,1210],[1030,1210],[1070,1165],[1130,1130],[1160,1110],[1190,1105],[1225,1117],[1262,1158],[1340,1188],[1380,1178],[1450,1135],[1500,1128]]),
  S([[1105,878],[1125,875],[1150,880],[1175,885],[1205,890]])
);
var VOL_YELLOW = [].concat(
  S([[0,870],[20,865],[50,872],[90,885],[140,898],[170,890],[210,887],[260,882],[300,885],[350,885],[400,888],[440,883],[490,878],[540,895],[590,905],[640,905],[690,900],[726,898]]),
  Z12([[40,1233],[65,1240],[100,1195],[130,1100],[175,1020],[235,900],[290,785],[340,750],[400,675],[450,657],[490,700],[530,800],[600,885],[650,975],[690,1010],[760,1035],[840,1075],[905,1090],[965,1120],[1030,1147],[1075,1135],[1180,1160],[1240,1165],[1310,1160],[1370,1143],[1450,1148],[1500,1148]]),
  S([[1125,877],[1160,880],[1185,884],[1207,892]])
);

var ZIG = {
  up: [[[7,538],[18,477]],[[109,792],[402,452]],[[548,630],[609,442]],[[806,642],[1072,100]],[[1472,412],[1523,292]]],
  down: [[[18,477],[109,792]],[[402,452],[548,630]],[[609,442],[776,643]],[[1072,100],[1472,412]],[[1523,292],[1602,440]]]
};

var DOTS_G = [].concat(
  Z8([[130,150],[171,177],[211,227],[247,286],[288,366],[323,452],[364,528],[400,596],[441,614],[481,672],[517,722],[558,750],[594,790],[710,433],[751,447],[787,460],[828,475],[864,484],[905,497],[940,506],[981,519],[1021,528]]),
  S([[338,327],[349,332],[358,337],[368,342],[378,347],[388,353],[398,358],[407,362],[416,370],[516,323],[526,332],[535,343],[544,355],[552,368],[561,377],[571,388],[580,399],[590,408],[600,417],[610,425],[620,430],[631,435]]),
  Z9([[410,38],[451,64],[487,86],[528,108],[564,130],[604,152],[640,198],[681,238],[722,275],[757,310],[797,347],[834,378],[875,405],[910,432],[951,459],[991,487],[1027,509],[1144,436],[1180,449]]),
  Z10([[94,16],[130,30],[171,48],[211,70],[247,97],[288,120],[323,143],[364,175],[400,206],[441,233],[482,251],[670,187],[711,201],[751,228],[787,250],[828,273],[864,296],[905,318],[940,336]])
);
var DOTS_R = [].concat(
  Z8([[18,772],[54,745],[94,722],[634,962],[670,952],[1058,741],[1098,722],[1134,690],[1174,650],[1210,592],[1250,538],[1291,492],[1327,447]]),
  S([[444,411],[452,409],[462,407],[471,405],[481,404],[490,402],[499,402],[650,462],[660,460],[669,458],[678,456],[688,455],[698,453],[708,451],[718,448],[728,445],[737,440],[745,428],[761,379],[770,347]]),
  Z9([[217,1004],[258,868],[293,746],[334,647],[370,594],[1067,688],[1103,688]]),
  Z10([[517,417],[558,412],[594,408],[634,404]])
);

var SEG = [[5,17,'g'],[17,33,'r'],[33,160,'g'],[160,188,'r'],[188,211,'g'],[211,225,'r'],[225,301,'g'],[301,471,'r'],[471,519,'g'],[519,535,'r'],[535,558,'g'],[558,663,'r'],[663,892,'g'],[892,1127,'r'],[1127,1265,'g'],[1265,1280,'r'],[1280,1509,'g'],[1509,1575,'r'],[1575,1665,'g']];
var GREEN = '#00ff00', RED = '#ff0000', DARK = '#990000';
var NS = 'http://www.w3.org/2000/svg';

function el(parent, name, attrs) {
  var e = document.createElementNS(NS, name);
  for (var k in attrs) e.setAttribute(k, attrs[k]);
  parent.appendChild(e);
  return e;
}
function $(id) { return document.getElementById(id); }
function xOf(i) { return Math.round(7.5 + 12.84 * i); }
function line(g, x1, y1, x2, y2, color, w, dash) {
  var a = { x1: x1, y1: y1, x2: x2, y2: y2, stroke: color, 'stroke-width': w };
  if (dash) a['stroke-dasharray'] = dash;
  return el(g, 'line', a);
}
function poly(g, pts, color, w) {
  return el(g, 'polyline', { points: pts.map(function (p) { return p[0].toFixed(1) + ',' + p[1].toFixed(1); }).join(' '), fill: 'none', stroke: color, 'stroke-width': w, 'stroke-linejoin': 'round' });
}

// price pane grid and axis
(function () {
  var g = $('p-grid');
  for (var k = 0; k < 10; k++) {
    var y = Math.round(119 + k * 70.67);
    line(g, 0, y, 1711, y, DARK, 2, '2 5');
    line(g, 1711, y, 1721, y, DARK, 2);
    line(g, 1711, y + 35, 1716, y + 35, DARK, 2);
  }
  line(g, 1712, 95, 1712, 828, DARK, 2);
  line(g, 0, 827, 1787, 827, DARK, 2);
  [[98.5, 3, 0, 1665], [382, 5, 0, 1665], [667, 4, 0, 540]].forEach(function (row) {
    SEG.forEach(function (s) {
      var a = s[0], b = Math.min(s[1], row[3]);
      if (b > a) line(g, a, row[0], b, row[0], s[2] === 'g' ? GREEN : RED, row[1]);
    });
  });
  line(g, 1620, 667, 1665, 667, GREEN, 4);

  var c = $('p-candles');
  CANDLES.forEach(function (d, i) {
    var x = xOf(i), col = d[0] === 'r' ? '#e83030' : d[0] === 'c' ? '#54ffff' : '#f0f0f0';
    var wick = d[0] === 'c' ? '#40c8d0' : col;
    line(c, x + 0.5, d[3], x + 0.5, d[4], wick, 2);
    if (d[0] === 'r') el(c, 'rect', { x: x - 4, y: d[1], width: 9, height: Math.max(d[2] - d[1], 2), fill: '#000', stroke: col, 'stroke-width': 2 });
    else if (d[0] === 'c') el(c, 'rect', { x: x - 5, y: d[1], width: 11, height: Math.max(d[2] - d[1], 2), fill: col });
    else line(c, x - 4, d[1], x + 5, d[1], col, 2);
  });

  var l = $('p-lines');
  poly(l, MAGENTA, '#d000d0', 1.6);
  poly(l, YELLOW, '#d0d000', 1.6);
  poly(l, WHITE, '#dcdcdc', 1.6);
  ZIG.down.forEach(function (s) { poly(l, s, '#50b050', 4.5); });
  ZIG.up.forEach(function (s) { poly(l, s, '#ff8484', 4.5); });

  var dots = $('p-dots');
  function diamond(p, color) {
    var x = p[0], y = p[1], r = 5.8;
    el(dots, 'path', { d: 'M' + x + ' ' + (y - r) + 'L' + (x + r) + ' ' + y + 'L' + x + ' ' + (y + r) + 'L' + (x - r) + ' ' + y + 'Z', fill: color });
  }
  DOTS_G.forEach(function (p) { diamond(p, GREEN); });
  DOTS_R.forEach(function (p) { diamond(p, RED); });
})();

// volume pane
(function () {
  var g = $('v-grid');
  [915, 1005, 1095, 1185].forEach(function (y) { line(g, 0, y, 1711, y, DARK, 2, '2 5'); });
  [915, 961, 1005, 1051, 1095, 1141, 1185, 1230].forEach(function (y) { line(g, 1711, y, 1721, y, DARK, 2); });
  line(g, 1712, 828, 1712, 1283, DARK, 2);
  var b = $('v-bars');
  CANDLES.forEach(function (d, i) {
    var x = xOf(i);
    if (d[0] === 'r') el(b, 'rect', { x: x - 4, y: d[5], width: 9, height: 1273 - d[5], fill: 'none', stroke: '#e83030', 'stroke-width': 2 });
    else el(b, 'rect', { x: x - 5, y: d[5], width: 11, height: 1274 - d[5], fill: '#54ffff' });
  });
  var l = $('v-lines');
  poly(l, VOL_WHITE, '#d8d8d8', 1.6);
  poly(l, VOL_YELLOW, '#d0d000', 1.6);
})();
```
